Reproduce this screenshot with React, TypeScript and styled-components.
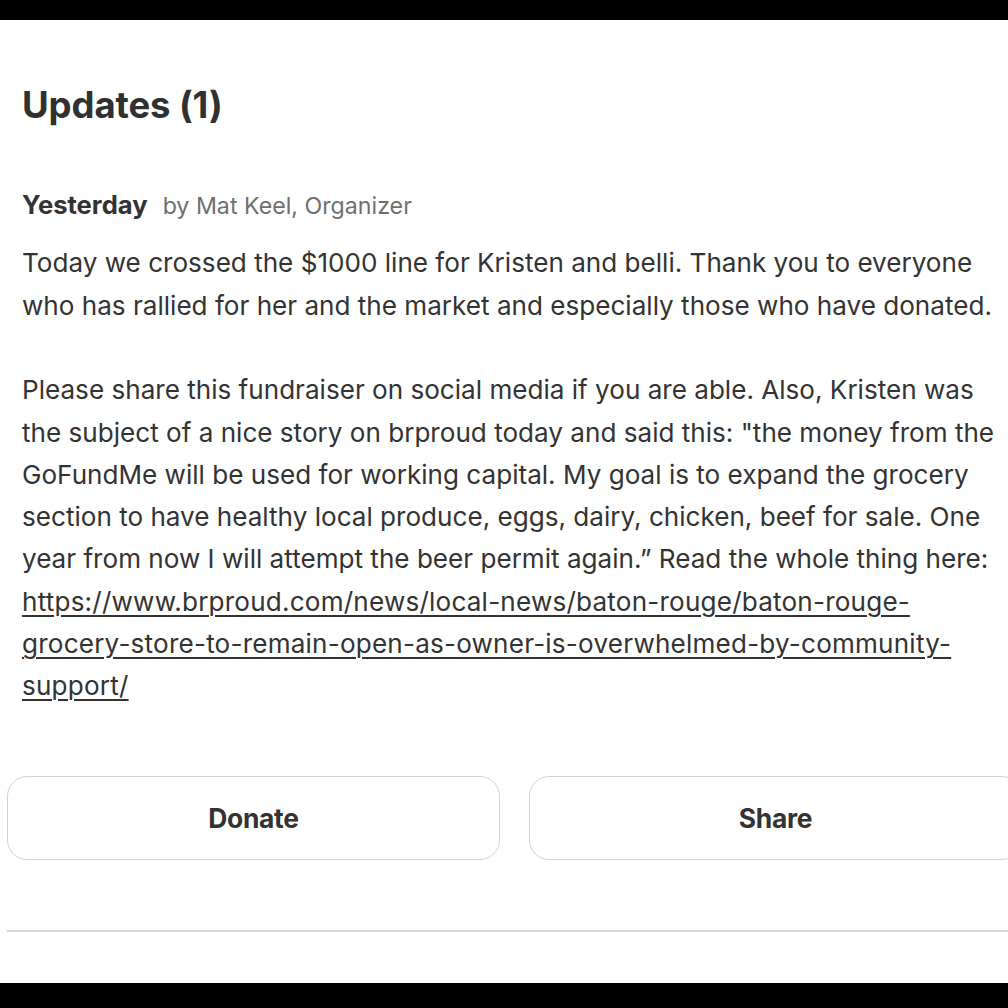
import React from "react";
import styled, { createGlobalStyle } from "styled-components";

const GlobalStyle = createGlobalStyle`
  html, body {
    margin: 0;
    padding: 0;
    background: #000;
    overflow: hidden;
  }
  body {
    font-family: "Inter", "Noto Sans", sans-serif;
    color: #333333;
    -webkit-font-smoothing: antialiased;
  }
`;

const Frame = styled.div`
  width: 1008px;
  height: 1008px;
  display: flex;
  flex-direction: column;
  overflow: hidden;
  background: #000;
`;

const Letterbox = styled.div<{ $h: number }>`
  flex: 0 0 ${(p) => p.$h}px;
  background: #000;
`;

const Screen = styled.main`
  flex: 1 1 auto;
  background: #ffffff;
  display: flex;
  flex-direction: column;
  padding-top: 62.7px;
  overflow: hidden;
`;

const Section = styled.section`
  padding-left: 22px;
  display: flex;
  flex-direction: column;
`;

const Title = styled.h2`
  margin: 0;
  font-size: 36.5px;
  line-height: 44px;
  font-weight: 700;
  color: #303030;
  letter-spacing: -0.1px;
`;

const Meta = styled.div`
  margin-top: 62px;
  display: flex;
  align-items: baseline;
  gap: 15px;
  line-height: 32px;
  white-space: nowrap;
`;

const When = styled.span`
  font-size: 25.6px;
  font-weight: 700;
  color: #333333;
`;

const Author = styled.span`
  font-size: 23.2px;
  font-weight: 400;
  color: #6f6f6f;
`;

const Body = styled.div`
  margin-top: 20.7px;
  display: flex;
  flex-direction: column;
  gap: 42.3px;
`;

const Paragraph = styled.p`
  margin: 0;
  font-size: 26.1px;
  line-height: 42.3px;
  font-weight: 400;
  color: #333333;
  white-space: nowrap;
`;

const Link = styled.a`
  color: #333333;
  letter-spacing: 0.2px;
  text-decoration: underline;
  text-decoration-thickness: 1.5px;
  text-underline-offset: 4px;
`;

const Actions = styled.div`
  margin-top: 68.3px;
  margin-left: 7px;
  width: 1015px;
  display: grid;
  grid-template-columns: 493px 493px;
  gap: 29px;
`;

const ActionButton = styled.button`
  height: 84px;
  border: 1.5px solid #d3d3d3;
  border-radius: 20px;
  background: #ffffff;
  font-family: "Inter", "Noto Sans", sans-serif;
  font-size: 26.4px;
  font-weight: 700;
  color: #333333;
  letter-spacing: -0.3px;
  cursor: pointer;
`;

const Divider = styled.hr`
  margin: 70px 0 0 7px;
  border: 0;
  border-top: 2px solid #d8d8d8;
  width: 1010px;
`;

export default function App() {
  return (
    <>
      <GlobalStyle />
      <Frame>
        <Letterbox $h={20} />
        <Screen>
          <Section>
            <Title>Updates (1)</Title>
            <Meta>
              <When>Yesterday</When>
              <Author>by Mat Keel, Organizer</Author>
            </Meta>
            <Body>
              <Paragraph>
                Today we crossed the $1000 line for Kristen and belli. Thank you to everyone
                <br />
                who has rallied for her and the market and especially those who have donated.
              </Paragraph>
              <Paragraph>
                Please share this fundraiser on social media if you are able. Also, Kristen was
                <br />
                the subject of a nice story on brproud today and said this: "the money from the
                <br />
                GoFundMe will be used for working capital. My goal is to expand the grocery
                <br />
                section to have healthy local produce, eggs, dairy, chicken, beef for sale. One
                <br />
                year from now I will attempt the beer permit again.” Read the whole thing here:
                <br />
                <Link href="#">
                  https://www.brproud.com/news/local-news/baton-rouge/baton-rouge-
                  <br />
                  grocery-store-to-remain-open-as-owner-is-overwhelmed-by-community-
                  <br />
                  support/
                </Link>
              </Paragraph>
            </Body>
          </Section>
          <Actions>
            <ActionButton>Donate</ActionButton>
            <ActionButton>Share</ActionButton>
          </Actions>
          <Divider />
        </Screen>
        <Letterbox $h={25} />
      </Frame>
    </>
  );
}
